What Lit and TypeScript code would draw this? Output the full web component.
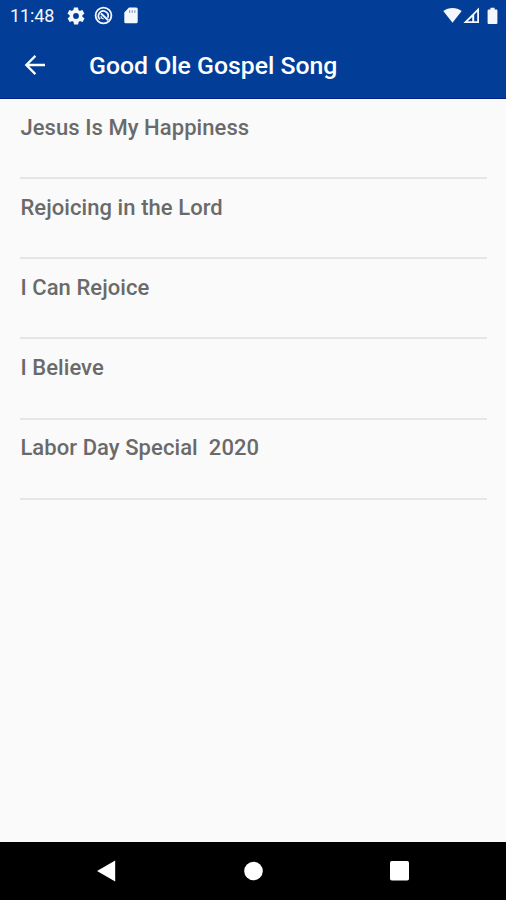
import { LitElement, html, css } from "lit";
import { customElement } from "lit/decorators.js";

const SONGS = [
  "Jesus Is My Happiness",
  "Rejoicing in the Lord",
  "I Can Rejoice",
  "I Believe",
  "Labor Day Special  2020",
];

@customElement("status-bar")
class StatusBar extends LitElement {
  static styles = css`
    :host { display: flex; height: 32px; align-items: center; justify-content: space-between; box-sizing: border-box; padding: 0 8px 0 10px; color: #f4f7fd; }
    .group { display: flex; align-items: center; height: 32px; }
    .clock { font-size: 18px; line-height: 32px; width: 57px; white-space: nowrap; letter-spacing: -0.1px; }
    svg { display: block; fill: currentColor; }
    .gear { margin-right: 9px; }
    .dnd { margin-right: 11px; }
    .wifi { margin-right: 1px; }
    .cell { margin-right: 7px; }
    .group svg { margin-top: -1px; }
  `;
  render() {
    return html`
      <div class="group">
        <span class="clock">11:48</span>
        <svg class="gear" width="18" height="18" viewBox="1.500 1.500 21 21"><path fill-rule="evenodd" d="M19.400 13a7.500 7.500 0 0 0 0-2l2.100-1.600c.2-.2.3-.5.1-.7l-2-3.400c-.1-.2-.4-.3-.6-.2l-2.500 1a7.300 7.300 0 0 0-1.700-1l-.4-2.600c0-.3-.2-.5-.5-.5h-4c-.2 0-.4.2-.5.4l-.4 2.700c-.6.2-1.200.6-1.700 1l-2.500-1c-.2-.1-.5 0-.6.2l-2 3.400c-.1.2-.1.5.1.7L4.600 11a7.500 7.500 0 0 0 0 2l-2.100 1.600c-.2.2-.2.5-.1.7l2 3.400c.1.2.4.3.6.2l2.500-1c.5.4 1.100.8 1.700 1l.4 2.700c.1.2.3.4.5.4h4c.2 0 .5-.2.5-.4l.4-2.700c.6-.2 1.200-.6 1.700-1l2.500 1c.2.1.5 0 .6-.2l2-3.400c.1-.2.1-.5-.1-.7zM12 8.600a3.400 3.400 0 1 1 0 6.800 3.400 3.400 0 0 1 0-6.800z"/></svg>
        <svg class="dnd" width="19" height="19" viewBox="0 0 19 19"><g fill="none" stroke="currentColor"><circle cx="9.500" cy="9.500" r="7.900" stroke-width="1.800"/><path d="M6 13.300A4.800 4.800 0 1 1 13.700 11.800" stroke-width="1.700"/><path d="M7 7.500L14.200 14.200" stroke-width="2"/><path d="M7 10.300a2.800 2.800 0 0 0 2.600 2.500" stroke-width="1.300"/></g></svg>
        <svg width="14" height="17" viewBox="0 0 14 17"><path fill-rule="evenodd" d="M5 .6h7.200A1.500 1.500 0 0 1 13.700 2.100v12.600a1.500 1.500 0 0 1-1.500 1.500H1.800A1.500 1.500 0 0 1 .3 14.700V5.400z"/><path fill="#7d9ccc" d="M5 3.300h1.200v2.500H5zm2.600 0h1.200v2.500H7.600zm2.600 0h1.200v2.500h-1.200z"/></svg>
      </div>
      <div class="group">
        <svg class="wifi" width="19" height="17" viewBox="0 0 19 17"><path d="M.3 4.100C5.700-.2 13.300-.2 18.700 4.100L9.500 15.800z"/></svg>
        <svg class="cell" width="17" height="17" viewBox="0 0 17 17"><path fill-rule="evenodd" d="M.4 16L16 .6V16zM4.800 14.300H9.200V9.900zM11.200 14.300h3V4.800l-3 3z"/></svg>
        <svg width="11" height="18" viewBox="0 0 11 18"><path d="M3.400.8h4.200v1.700h1.800q1 0 1 1v12.600q0 1-1 1H1.600q-1 0-1-1V3.500q0-1 1-1h1.800z"/></svg>
      </div>`;
  }
}

@customElement("app-bar")
class AppBar extends LitElement {
  static styles = css`
    :host { display: flex; align-items: center; height: 67px; box-sizing: border-box; padding: 0 24px 1px; border-bottom: 1px solid #01208a; color: #fff; }
    svg { display: block; flex: none; }
    h1 { margin: 3px 0 0 43px; font-size: 24.800px; font-weight: 500; line-height: 30px; white-space: nowrap; }
  `;
  render() {
    return html`
      <svg width="22" height="22" viewBox="0 0 22 22" fill="none" stroke="currentColor" stroke-width="2.300"><path d="M21 11H3M11.400 1.900L2.300 11l9.100 9.100"/></svg>
      <h1>Good Ole Gospel Song</h1>`;
  }
}

@customElement("nav-bar")
class NavBar extends LitElement {
  static styles = css`
    :host { display: grid; grid-template-columns: repeat(3, 146.500px); justify-content: center; justify-items: center; align-items: center; height: 58px; background: #000; }
    svg { display: block; fill: #fff; }
  `;
  render() {
    return html`
      <svg width="20" height="22" viewBox="0.800 0 20 22"><path d="M19 .5v21L.8 11z"/></svg>
      <svg width="20" height="20" viewBox="-0.500 0 20 20"><circle cx="10" cy="10" r="9.300"/></svg>
      <svg width="20" height="20" viewBox="1 0 20 20"><rect x="1" width="19" height="19.600" rx="1.800"/></svg>`;
  }
}

@customElement("app-root")
class AppRoot extends LitElement {
  static styles = css`
    :host { display: flex; flex-direction: column; height: 900px; background: #fafafa; font-family: Roboto, "Liberation Sans", sans-serif; }
    header { background: #023e98; }
    ul { flex: 1; list-style: none; margin: 0; padding: 0 19px 0 20px; }
    li { box-sizing: border-box; height: 80.150px; padding: 14.800px 0 0 0.400px; border-bottom: 2px solid #e6e6e6; color: #6a6a6a; font-size: 22px; font-weight: 500; line-height: 28px; letter-spacing: 0.070px; white-space: pre; }
  `;
  render() {
    return html`
      <header><status-bar></status-bar><app-bar></app-bar></header>
      <ul>${SONGS.map((s) => html`<li>${s}</li>`)}</ul>
      <nav-bar></nav-bar>`;
  }
}
